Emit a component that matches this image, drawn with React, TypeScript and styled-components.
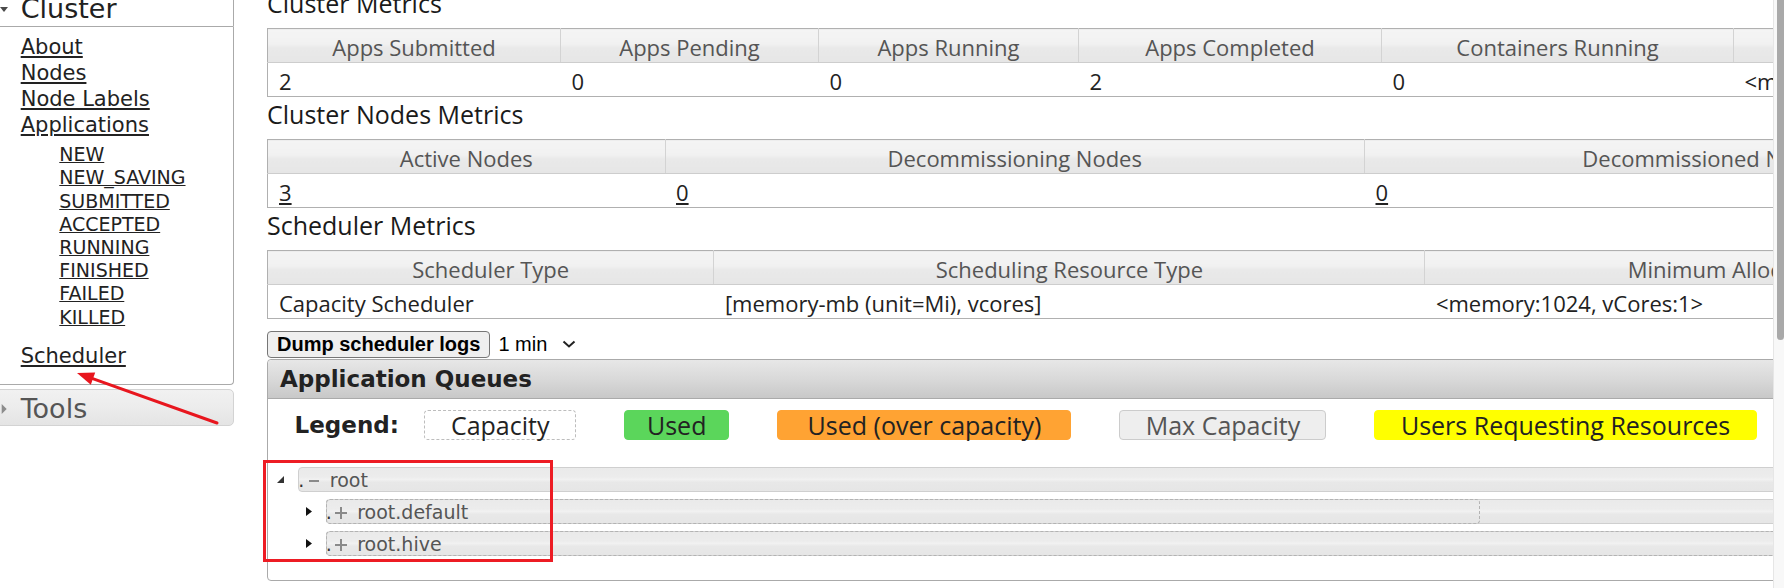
import React from 'react';
import styled, { createGlobalStyle } from 'styled-components';

const GlobalStyle = createGlobalStyle`
  html, body { margin: 0; padding: 0; background: #ffffff; overflow: hidden; }
  #root { width: 1784px; height: 588px; }
  *, *::before, *::after { box-sizing: border-box; }
`;

const Page = styled.div`
  position: relative;
  display: flex;
  align-items: flex-start;
  width: 1784px;
  height: 588px;
  overflow: hidden;
  background: #ffffff;
`;

/* ---------- Sidebar ---------- */
const Sidebar = styled.nav`
  flex: none;
  width: 244px;
  margin: -14px 0 0 -10px;
  font-family: "DejaVu Sans", Verdana, sans-serif;
`;

const AccordionHeader = styled.div<{ $active?: boolean }>`
  display: flex;
  align-items: center;
  height: ${(p) => (p.$active ? 41 : 37)}px;
  margin-top: ${(p) => (p.$active ? 0 : 4)}px;
  padding: ${(p) => (p.$active ? '5px 0 0 9px' : '2px 0 0 9px')};
  border: 1px solid ${(p) => (p.$active ? '#aaaaaa' : '#d3d3d3')};
  border-radius: ${(p) => (p.$active ? '0 4px 0 0' : '5px')};
  background: ${(p) =>
    p.$active ? '#ffffff' : 'linear-gradient(to bottom, #f1f1f1 0%, #ececec 50%, #e4e4e4 100%)'};
  color: ${(p) => (p.$active ? '#212121' : '#555555')};
  font-size: 27px;
  line-height: ${(p) => (p.$active ? 34 : 33)}px;
`;

const HeaderIcon = styled.span`
  flex: none;
  width: 8px;
  margin-right: 12.7px;
  display: flex;
  align-items: center;
`;

const AccordionContent = styled.div`
  border: 1px solid #aaaaaa;
  border-top: 0;
  border-radius: 0 0 4px 4px;
  padding: 8.4px 0 14.5px 29.7px;
  background: #ffffff;
`;

const NavLink = styled.a<{ $sub?: boolean }>`
  display: block;
  width: fit-content;
  color: #222222;
  text-decoration: underline;
  font-size: ${(p) => (p.$sub ? 19 : 21)}px;
  line-height: ${(p) => (p.$sub ? 23.2 : 25.8)}px;
`;

const SubList = styled.div`
  margin: 4.6px 0 0 38.6px;
`;

const NavGroup = styled.div`
  margin-top: 15.4px;
`;

/* ---------- Main ---------- */
const Main = styled.main`
  flex: 1;
  min-width: 0;
  margin-top: -14px;
  padding-left: 33px;
  overflow: hidden;
`;

const Content = styled.div`
  width: 2000px;
`;

const SectionTitle = styled.h3`
  margin: 1.5px 0 10.5px;
  font-family: "Open Sans", sans-serif;
  font-size: 25px;
  line-height: 30px;
  font-weight: 400;
  color: #1a1a1a;
`;

const MetricsTable = styled.table<{ $width: number }>`
  width: ${(p) => p.$width}px;
  border-collapse: collapse;
  table-layout: fixed;
  font-family: "Open Sans", sans-serif;
  font-size: 22px;
  border: 1px solid #b0b0b0;
`;

const Col = styled.col<{ $w: number }>`
  width: ${(p) => p.$w}px;
`;

const HeadCell = styled.th`
  height: 33px;
  padding: 3px 6px 0;
  line-height: 30px;
  font-weight: 400;
  color: #555555;
  text-align: center;
  white-space: nowrap;
  overflow: hidden;
  background: linear-gradient(to bottom, #f4f4f4 0%, #f1f1f1 45%, #e9e9e9 55%, #e6e6e6 100%);
  border-right: 1px solid #d3d3d3;
  border-bottom: 1px solid #cdcdcd;
`;

const DataCell = styled.td`
  height: 33px;
  padding: 3px 0 0 11px;
  line-height: 30px;
  color: #222222;
  text-align: left;
  white-space: nowrap;
  overflow: hidden;
  background: #ffffff;
`;

const DataLink = styled.a`
  color: #222222;
  text-decoration: underline;
`;

const ButtonRow = styled.div`
  display: flex;
  align-items: center;
  height: 27px;
  margin-top: 11.7px;
`;

const DumpButton = styled.button`
  height: 27px;
  padding: 0 9px;
  font-family: "Liberation Sans", Arial, sans-serif;
  font-weight: 700;
  font-size: 20px;
  line-height: 25px;
  color: #000000;
  background: #efefef;
  border: 1px solid #767676;
  border-radius: 4px;
`;

const IntervalSelect = styled.select`
  appearance: none;
  -webkit-appearance: none;
  border: 0;
  background: transparent;
  padding: 0;
  margin: 0 0 0 8px;
  font-family: "Liberation Sans", Arial, sans-serif;
  font-size: 20px;
  color: #000000;
`;

const Chevron = styled.svg`
  margin-left: 15px;
`;

const Panel = styled.section`
  margin-top: 1px;
  border: 1px solid #aaaaaa;
  border-radius: 4px;
  width: 100%;
`;

const PanelHeader = styled.div`
  height: 39px;
  padding-left: 12px;
  border-bottom: 1px solid #aaaaaa;
  border-radius: 4px 4px 0 0;
  background: linear-gradient(to bottom, #e7e7e7 0%, #d9d9d9 50%, #c8c8c8 100%);
  font-family: "DejaVu Sans", Verdana, sans-serif;
  font-weight: 700;
  font-size: 23px;
  line-height: 38px;
  color: #222222;
`;

const Legend = styled.div`
  display: flex;
  align-items: center;
  height: 30px;
  margin-top: 11px;
  padding-left: 26.6px;
`;

const LegendLabel = styled.span`
  margin-right: 25.5px;
  font-family: "DejaVu Sans", Verdana, sans-serif;
  font-weight: 700;
  font-size: 23px;
  color: #222222;
`;

type LegendKind = 'capacity' | 'used' | 'over' | 'max' | 'requesting';

const legendColors: Record<LegendKind, { bg: string; border: string; color: string }> = {
  capacity: { bg: '#ffffff', border: '1px dashed #bdbdbd', color: '#222222' },
  used: { bg: '#5bd65b', border: '1px solid #5bd65b', color: '#222222' },
  over: { bg: '#ffa333', border: '1px solid #ffa333', color: '#222222' },
  max: { bg: '#eeeeee', border: '1px solid #cccccc', color: '#555555' },
  requesting: { bg: '#ffff00', border: '1px solid #ffff00', color: '#222222' },
};

const LegendItem = styled.span<{ $kind: LegendKind; $w: number }>`
  flex: none;
  width: ${(p) => p.$w}px;
  height: 30px;
  margin-right: 48px;
  border: ${(p) => legendColors[p.$kind].border};
  border-radius: 4px;
  background: ${(p) => legendColors[p.$kind].bg};
  color: ${(p) => legendColors[p.$kind].color};
  font-family: "Open Sans", sans-serif;
  font-size: 25px;
  line-height: 28px;
  text-align: center;
  white-space: nowrap;
`;

const Tree = styled.div`
  display: flex;
  flex-direction: column;
  gap: 7px;
  margin-top: 27.5px;
  padding-bottom: 24px;
`;

const TreeRow = styled.div<{ $depth: number }>`
  display: flex;
  align-items: center;
  height: 25px;
  padding-left: ${(p) => 8.7 + p.$depth * 27.4}px;
`;

const Toggle = styled.span<{ $open?: boolean }>`
  flex: none;
  width: 21.6px;
  display: flex;
  align-items: center;
  padding-left: ${(p) => (p.$open ? 0 : 1.9)}px;
`;

const QueueBar = styled.div`
  position: relative;
  flex: 1;
  height: 25px;
  display: flex;
  align-items: center;
  padding-top: 1px;
  border: 1px solid #cfcfcf;
  border-radius: 4px 0 0 4px;
  background: linear-gradient(to bottom, #eaeaea 0%, #ececec 38%, #f1f1f1 50%, #e8e8e8 62%, #e6e6e6 100%);
  font-family: "DejaVu Sans", Verdana, sans-serif;
  font-size: 19px;
  line-height: 22px;
  color: #555555;
  white-space: nowrap;
`;

const CapacityOutline = styled.span`
  position: absolute;
  left: -1px;
  top: -1px;
  bottom: -1px;
  border: 1px dashed #b3b3b3;
  border-radius: 4px;
  pointer-events: none;
`;

const QueueDot = styled.span`
  position: relative;
  margin-left: -1px;
  color: #333333;
`;

const QueueIcon = styled.span`
  position: relative;
  flex: none;
  width: 14px;
  height: 14px;
  margin: 1px 0 0 2.7px;
  display: flex;
`;

const QueueName = styled.span`
  position: relative;
  margin-left: 8.8px;
`;

const Scrollbar = styled.div`
  flex: none;
  width: 11px;
  height: 588px;
  padding-left: 3px;
  border-left: 1px solid #e6e6e6;
  background: #f8f8f8;
`;

const ScrollThumb = styled.div`
  width: 7px;
  height: 340px;
  border-radius: 0 0 4px 4px;
  background: #a9a9a9;
`;

/* ---------- Annotations ---------- */
const Highlight = styled.div`
  position: absolute;
  left: 262.7px;
  top: 460px;
  width: 290px;
  height: 101.7px;
  border: 3.3px solid #ed1c24;
  pointer-events: none;
`;

const ArrowLayer = styled.svg`
  position: absolute;
  left: 0;
  top: 0;
  pointer-events: none;
`;

/* ---------- Data ---------- */
type Column = { head: string; value: string; width: number; link?: boolean };

const clusterMetrics: Column[] = [
  { head: 'Apps Submitted', value: '2', width: 293 },
  { head: 'Apps Pending', value: '0', width: 258 },
  { head: 'Apps Running', value: '0', width: 260 },
  { head: 'Apps Completed', value: '2', width: 303 },
  { head: 'Containers Running', value: '0', width: 352 },
  { head: 'Used Resources', value: '<memory:0, vCores:0>', width: 300 },
  { head: 'Total Resources', value: '<memory:24 GB, vCores:24>', width: 320 },
];

const nodeMetrics: Column[] = [
  { head: 'Active Nodes', value: '3', width: 397.5, link: true },
  { head: 'Decommissioning Nodes', value: '0', width: 699.5, link: true },
  { head: 'Decommissioned Nodes', value: '0', width: 685, link: true },
  { head: 'Lost Nodes', value: '0', width: 300, link: true },
];

const schedulerMetrics: Column[] = [
  { head: 'Scheduler Type', value: 'Capacity Scheduler', width: 446.4 },
  { head: 'Scheduling Resource Type', value: '[memory-mb (unit=Mi), vcores]', width: 711 },
  { head: 'Minimum Allocation', value: '<memory:1024, vCores:1>', width: 611 },
  { head: 'Maximum Allocation', value: '<memory:8192, vCores:4>', width: 500 },
];

const appStates = ['NEW', 'NEW_SAVING', 'SUBMITTED', 'ACCEPTED', 'RUNNING', 'FINISHED', 'FAILED', 'KILLED'];

const legendItems: { kind: LegendKind; label: string; w: number }[] = [
  { kind: 'capacity', label: 'Capacity', w: 151.5 },
  { kind: 'used', label: 'Used', w: 105.5 },
  { kind: 'over', label: 'Used (over capacity)', w: 294 },
  { kind: 'max', label: 'Max Capacity', w: 207 },
  { kind: 'requesting', label: 'Users Requesting Resources', w: 382.3 },
];

const queues: { name: string; depth: number; open: boolean; capacity?: number }[] = [
  { name: 'root', depth: 0, open: true },
  { name: 'root.default', depth: 1, open: false, capacity: 1154.3 },
  { name: 'root.hive', depth: 1, open: false, capacity: 2000 },
];

const Metrics: React.FC<{ columns: Column[] }> = ({ columns }) => {
  const total = columns.reduce((s, c) => s + c.width, 0);
  return (
    <MetricsTable $width={total}>
      <colgroup>
        {columns.map((c) => (
          <Col key={c.head} $w={c.width} />
        ))}
      </colgroup>
      <thead>
        <tr>
          {columns.map((c) => (
            <HeadCell key={c.head}>{c.head}</HeadCell>
          ))}
        </tr>
      </thead>
      <tbody>
        <tr>
          {columns.map((c) => (
            <DataCell key={c.head}>{c.link ? <DataLink href="#">{c.value}</DataLink> : c.value}</DataCell>
          ))}
        </tr>
      </tbody>
    </MetricsTable>
  );
};

const TriangleOpen = () => (
  <svg width="7" height="7" viewBox="0 0 7 7">
    <polygon points="7,0 7,7 0,7" fill="#333333" />
  </svg>
);

const TriangleClosed = () => (
  <svg width="6" height="9" viewBox="0 0 6 9">
    <polygon points="0,0 6,4.5 0,9" fill="#111111" />
  </svg>
);

const MinusIcon = () => (
  <svg width="14" height="14" viewBox="0 0 14 14">
    <rect x="2" y="6" width="10" height="2" fill="#8a8a8a" />
  </svg>
);

const PlusIcon = () => (
  <svg width="14" height="14" viewBox="0 0 14 14">
    <rect x="1" y="6" width="12" height="2" fill="#8a8a8a" />
    <rect x="6" y="1" width="2" height="12" fill="#8a8a8a" />
  </svg>
);

export default function App() {
  return (
    <Page>
      <GlobalStyle />
      <Sidebar>
        <AccordionHeader $active>
          <HeaderIcon>
            <svg width="8" height="5" viewBox="0 0 8 5">
              <polygon points="0,0 8,0 4,5" fill="#4a4a4a" />
            </svg>
          </HeaderIcon>
          <span>Cluster</span>
        </AccordionHeader>
        <AccordionContent>
          <NavLink href="#">About</NavLink>
          <NavLink href="#">Nodes</NavLink>
          <NavLink href="#">Node Labels</NavLink>
          <NavLink href="#">Applications</NavLink>
          <SubList>
            {appStates.map((s) => (
              <NavLink key={s} href="#" $sub>
                {s}
              </NavLink>
            ))}
          </SubList>
          <NavGroup>
            <NavLink href="#">Scheduler</NavLink>
          </NavGroup>
        </AccordionContent>
        <AccordionHeader>
          <HeaderIcon>
            <svg width="8" height="10" viewBox="0 0 8 10">
              <polygon points="1.7,0 6.7,5 1.7,10" fill="#8c8c8c" />
            </svg>
          </HeaderIcon>
          <span>Tools</span>
        </AccordionHeader>
      </Sidebar>

      <Main>
        <Content>
          <SectionTitle>Cluster Metrics</SectionTitle>
          <Metrics columns={clusterMetrics} />
          <SectionTitle>Cluster Nodes Metrics</SectionTitle>
          <Metrics columns={nodeMetrics} />
          <SectionTitle>Scheduler Metrics</SectionTitle>
          <Metrics columns={schedulerMetrics} />

          <ButtonRow>
            <DumpButton type="button">Dump scheduler logs</DumpButton>
            <IntervalSelect defaultValue="1">
              <option value="1">1 min</option>
              <option value="5">5 min</option>
            </IntervalSelect>
            <Chevron width="14" height="8" viewBox="0 0 14 8">
              <polyline points="1.5,1.5 7,6.5 12.5,1.5" fill="none" stroke="#222222" strokeWidth="2" />
            </Chevron>
          </ButtonRow>

          <Panel>
            <PanelHeader>Application Queues</PanelHeader>
            <Legend>
              <LegendLabel>Legend:</LegendLabel>
              {legendItems.map((l) => (
                <LegendItem key={l.kind} $kind={l.kind} $w={l.w}>
                  {l.label}
                </LegendItem>
              ))}
            </Legend>
            <Tree>
              {queues.map((q) => (
                <TreeRow key={q.name} $depth={q.depth}>
                  <Toggle $open={q.open}>{q.open ? <TriangleOpen /> : <TriangleClosed />}</Toggle>
                  <QueueBar>
                    {q.capacity ? <CapacityOutline style={{ width: q.capacity }} /> : null}
                    <QueueDot>.</QueueDot>
                    <QueueIcon>{q.open ? <MinusIcon /> : <PlusIcon />}</QueueIcon>
                    <QueueName>{q.name}</QueueName>
                  </QueueBar>
                </TreeRow>
              ))}
            </Tree>
          </Panel>
        </Content>
      </Main>

      <Scrollbar>
        <ScrollThumb />
      </Scrollbar>

      <Highlight />
      <ArrowLayer width="240" height="440" viewBox="0 0 240 440">
        <line x1="217" y1="423" x2="92" y2="378.4" stroke="#e8161e" strokeWidth="3" strokeLinecap="round" />
        <polygon points="77,373 90.8,384.8 95.2,372.6" fill="#e8161e" />
      </ArrowLayer>
    </Page>
  );
}
